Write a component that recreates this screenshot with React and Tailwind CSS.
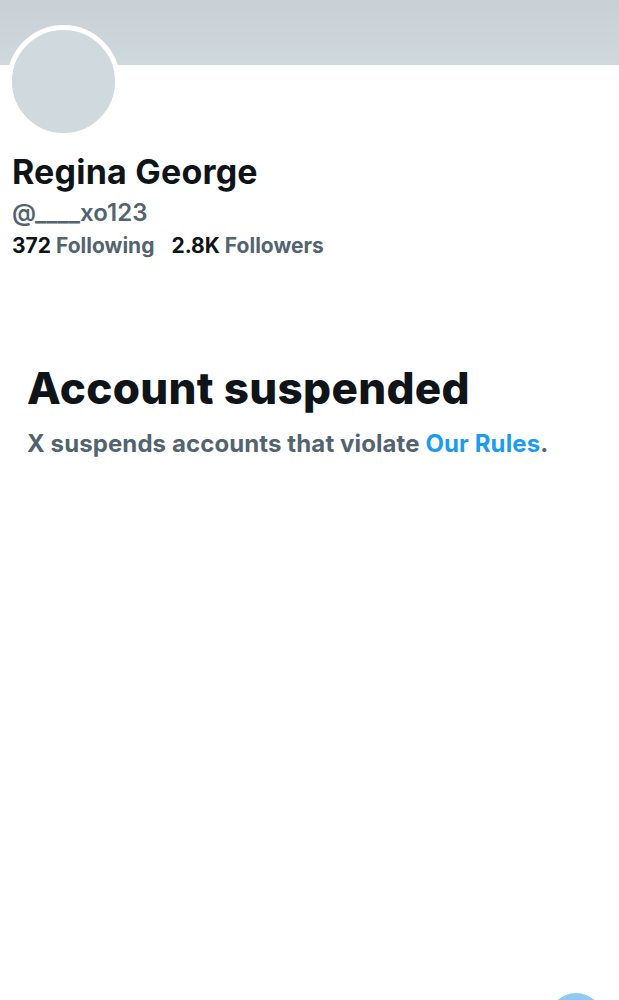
export default function App() {
  return (
    <div
      className="relative h-[1000px] w-[619px] overflow-hidden bg-white text-[#0f1419]"
      style={{ fontFamily: "Inter, 'Liberation Sans', sans-serif" }}
    >
      <div className="h-[65px] bg-gradient-to-b from-[#c8d0d6] to-[#cfd8dd]" />
      <div className="px-[12px]">
        <div className="-mt-[40px] h-[113px] w-[113px] -ml-[5px] rounded-full border-[5px] border-white bg-[#cfd9de]" />
        <h1 className="mt-[14px] text-[34px] font-bold leading-[40px] tracking-[0.2px]">
          Regina George
        </h1>
        <div className="mt-[7px] text-[24px] font-semibold leading-[28px] text-[#536471]">
          @____xo123
        </div>
        <div className="mt-[6px] flex gap-[17px] text-[21px] font-bold leading-[26px]">
          <span>
            372 <span className="text-[#536471]">Following</span>
          </span>
          <span>
            2.8K <span className="text-[#536471]">Followers</span>
          </span>
        </div>
      </div>
      <div className="mt-[104px] px-[27px]">
        <h2 className="text-[44px] font-extrabold leading-[50px] tracking-[0.3px]">
          Account suspended
        </h2>
        <p className="mt-[16px] text-[24px] font-bold leading-[30px] tracking-[0.1px] text-[#536471]">
          X suspends accounts that violate{" "}
          <span className="text-[#1d9bf0]">Our Rules</span>.
        </p>
      </div>
      <div className="absolute left-[548px] top-[993px] h-[56px] w-[56px] rounded-full bg-[#8dcbf5]" />
    </div>
  );
}
